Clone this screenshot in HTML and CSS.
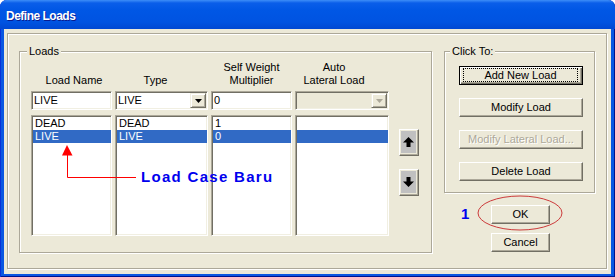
FILE: index.html
```html
<!DOCTYPE html>
<html lang="en">
    <head>
        <meta charset="UTF-8" />
        <title>Define Loads</title>
        <link rel="stylesheet" href="styles.css">
    </head>

    <body>
        <div class="window">
            <div class="titlebar"><span class="title">Define Loads</span></div>
            <div class="client">
                <div class="frame">
                    <div class="group loads">
                        <span class="legend">Loads</span>
                        <div class="columns">
                            <div class="col col-name">
                                <div class="head">Load Name</div>
                                <div class="field">LIVE</div>
                                <ul class="list">
                                    <li>DEAD</li>
                                    <li class="sel">LIVE</li>
                                </ul>
                            </div>
                            <div class="col col-type">
                                <div class="head">Type</div>
                                <div class="field combo">
                                    <span class="value">LIVE</span>
                                    <span class="drop">
                                        <svg width="7" height="4" viewBox="0 0 7 4"><polygon points="0,0 7,0 3.5,4" fill="#000"/></svg>
                                    </span>
                                </div>
                                <ul class="list">
                                    <li>DEAD</li>
                                    <li class="sel">LIVE</li>
                                </ul>
                            </div>
                            <div class="col col-self">
                                <div class="head">Self Weight<br>Multiplier</div>
                                <div class="field">0</div>
                                <ul class="list">
                                    <li>1</li>
                                    <li class="sel">0</li>
                                </ul>
                            </div>
                            <div class="col col-auto">
                                <div class="head">Auto<br>Lateral Load</div>
                                <div class="field combo disabled">
                                    <span class="value"></span>
                                    <span class="drop">
                                        <svg width="7" height="4" viewBox="0 0 7 4"><polygon points="0,0 7,0 3.5,4" fill="#aca899"/></svg>
                                    </span>
                                </div>
                                <ul class="list">
                                    <li>&nbsp;</li>
                                    <li class="sel">&nbsp;</li>
                                </ul>
                            </div>
                        </div>
                        <div class="movers">
                            <button class="mover">
                                <span class="face">
                                    <svg width="11" height="10" viewBox="0 0 11 10"><polygon points="0,5.5 5.5,0 11,5.5 7.5,5.5 7.5,10 3.5,10 3.5,5.5" fill="#000"/></svg>
                                </span>
                            </button>
                            <button class="mover">
                                <span class="face">
                                    <svg width="11" height="10" viewBox="0 0 11 10"><polygon points="0,4.5 5.5,10 11,4.5 7.5,4.5 7.5,0 3.5,0 3.5,4.5" fill="#000"/></svg>
                                </span>
                            </button>
                        </div>
                    </div>

                    <div class="side">
                        <div class="group clickto">
                            <span class="legend">Click To:</span>
                            <button class="btn default"><span>Add New Load</span></button>
                            <button class="btn">Modify Load</button>
                            <button class="btn" disabled>Modify Lateral Load...</button>
                            <button class="btn">Delete Load</button>
                        </div>
                        <button class="btn small ok">OK</button>
                        <button class="btn small cancel">Cancel</button>
                    </div>
                </div>
            </div>

            <!-- annotations drawn over the dialog -->
            <svg class="marks" width="615" height="277" viewBox="0 0 615 277">
                <polyline points="67.5,154 67.5,177.5 136,177.5" fill="none" stroke="#ff0000" stroke-width="1"/>
                <polygon points="67,145 62,155.5 72.5,155.5" fill="#ff0000"/>
                <ellipse cx="520" cy="213" rx="42" ry="17" fill="none" stroke="#cc3a3a" stroke-width="1"/>
            </svg>
            <div class="note">Load Case Baru</div>
            <div class="step">1</div>
        </div>
    </body>
</html>
```

FILE: styles.css
```css
* {
    margin: 0;
    padding: 0;
    box-sizing: border-box;
}

body {
    width: 615px;
    height: 277px;
    overflow: hidden;
    background: #fff;
    font-family: "Liberation Sans", Arial, sans-serif;
    font-size: 11px;
    color: #000;
}

li {
    list-style-type: none;
}

button {
    font: inherit;
    color: #000;
}

.window {
    position: relative;
    width: 615px;
    height: 277px;
    display: flex;
    flex-direction: column;
    background: #0a57e2;
    border-radius: 7px 7px 0 0;
    box-shadow: inset 1px 0 0 #0831d9, inset -1px 0 0 #00138c, inset 0 -1px 0 #00138c;
}

.titlebar {
    height: 29px;
    padding: 9px 0 0 6px;
    border-radius: 7px 7px 0 0;
    background: linear-gradient(#3d8ef8 0, #0a5ee9 3px, #0057e5 10px, #0053e1 22px, #0048d2 29px);
}

.title {
    color: #fff;
    font-weight: bold;
    font-size: 12px;
    line-height: 14px;
    letter-spacing: -0.5px;
    text-shadow: 1px 1px 0 #0a1b8f;
}

.client {
    flex: 1;
    display: flex;
    margin: 0 4px 3px 4px;
    padding: 4px 4px 5px 3px;
    background: #ece9d8;
}

.frame {
    flex: 1;
    display: flex;
    align-items: flex-start;
    padding: 17px 0 0 11px;
    border: 1px solid #aca899;
    box-shadow: 1px 1px 0 #fff, inset 1px 1px 0 #fff;
}

.group {
    position: relative;
    border: 1px solid #aca899;
    box-shadow: 1px 1px 0 #fff, inset 1px 1px 0 #fff;
}

.group .legend {
    position: absolute;
    top: -7px;
    left: 7px;
    padding: 0 2px;
    line-height: 13px;
    background: #ece9d8;
}

/* loads table */
.loads {
    width: 413px;
    height: 202px;
    display: flex;
    gap: 10px;
    padding: 9px 11px 0 11px;
}

.columns {
    display: flex;
    gap: 3px;
}

.col {
    display: flex;
    flex-direction: column;
}

.col-name { width: 81px; }
.col-type { width: 93px; }
.col-self { width: 81px; }
.col-auto { width: 94px; }

.head {
    height: 26px;
    margin-bottom: 4px;
    display: flex;
    flex-direction: column;
    justify-content: flex-end;
    text-align: center;
    line-height: 13px;
}

.col-name .head { padding-left: 5px; }
.col-type .head { padding-right: 12px; }
.col-auto .head { padding-right: 16px; }

.field,
.list {
    background: #fff;
    border: 1px solid;
    border-color: #aca899 #fff #fff #aca899;
    box-shadow: inset 1px 1px 0 #716f64, inset -1px -1px 0 #f1efe2;
}

.field {
    height: 19px;
    display: flex;
    align-items: center;
    padding: 0 1px 0 2px;
    line-height: 17px;
}

.field.disabled {
    background: #ece9d8;
}

.combo .value {
    flex: 1;
}

.drop {
    width: 16px;
    height: 15px;
    display: flex;
    align-items: center;
    justify-content: center;
    background: #ece9d8;
    border: 1px solid;
    border-color: #f1efe2 #716f64 #716f64 #f1efe2;
    box-shadow: inset 1px 1px 0 #fff, inset -1px -1px 0 #aca899;
}

.list {
    height: 121px;
    margin-top: 5px;
    padding: 1px 0 0 1px;
}

.list li {
    height: 13px;
    line-height: 13px;
    padding-left: 2px;
    white-space: nowrap;
}

.list li.sel {
    background: #316ac5;
    color: #fff;
}

.movers {
    display: flex;
    flex-direction: column;
    gap: 13px;
    padding-top: 68px;
}

.mover {
    width: 20px;
    height: 27px;
    display: flex;
    padding: 1px 2px 2px 1px;
    background: #ece9d8;
    border: 1px solid;
    border-color: #fff #716f64 #716f64 #fff;
    box-shadow: inset -1px -1px 0 #aca899;
}

.mover .face {
    flex: 1;
    display: flex;
    align-items: center;
    justify-content: center;
    background: #c0c0c0;
}

/* right hand buttons */
.side {
    margin-left: 12px;
    display: flex;
    flex-direction: column;
}

.clickto {
    width: 151px;
    height: 142px;
    display: flex;
    flex-direction: column;
    gap: 13px;
    padding: 14px 0 0 14px;
}

.clickto .legend {
    left: 5px;
}

.btn {
    width: 124px;
    height: 19px;
    background: #ece9d8;
    border: 1px solid;
    border-color: #fff #716f64 #716f64 #fff;
    box-shadow: inset -1px -1px 0 #aca899;
    line-height: 15px;
    text-align: center;
}

.btn.default {
    display: flex;
    padding: 1px 4px 2px 3px;
    border-color: #000;
    box-shadow: inset 1px 1px 0 #fff, inset -1px -1px 0 #716f64, inset -2px -2px 0 #aca899;
}

.btn.default span {
    flex: 1;
    border: 1px dotted #000;
    line-height: 12px;
}

.btn:disabled {
    color: #aca899;
    text-shadow: 1px 1px 0 #fff;
}

.btn.small {
    width: 59px;
    margin-left: 47px;
}

.btn.ok {
    margin-top: 12px;
}

.btn.cancel {
    margin-top: 9px;
}

/* annotations */
.marks {
    position: absolute;
    left: 0;
    top: 0;
    pointer-events: none;
}

.note,
.step {
    position: absolute;
    color: #0000ee;
    font-weight: bold;
    font-size: 15px;
    line-height: 15px;
}

.note {
    left: 141px;
    top: 169px;
    letter-spacing: 1.3px;
}

.step {
    left: 461px;
    top: 206px;
}
```
